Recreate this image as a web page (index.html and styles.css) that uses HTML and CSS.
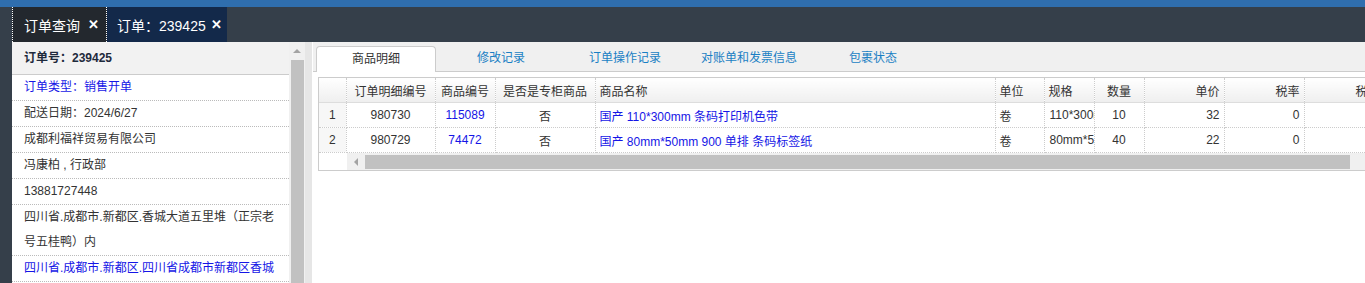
FILE: index.html
```html
<!DOCTYPE html>
<html lang="zh-CN">
    <head>
        <meta charset="UTF-8">
        <meta name="viewport" content="width=device-width, initial-scale=1.0">
        <title>订单：239425</title>
        <link rel="stylesheet" href="styles.css">
    </head>

    <body>
        <div class="topbar"></div>
        <div class="tabbar">
            <div class="tab">订单查询 <span class="close">✕</span></div>
            <div class="tab current">订单：239425 <span class="close">✕</span></div>
        </div>

        <div class="main">
            <div class="side">
                <div class="side-list">
                    <div class="side-head">订单号：239425</div>
                    <div class="side-row blue">订单类型：销售开单</div>
                    <div class="side-row">配送日期：2024/6/27</div>
                    <div class="side-row">成都利福祥贸易有限公司</div>
                    <div class="side-row">冯康柏 , 行政部</div>
                    <div class="side-row">13881727448</div>
                    <div class="side-row">四川省.成都市.新都区.香城大道五里堆（正宗老号五桂鸭）内</div>
                    <div class="side-row blue">四川省.成都市.新都区.四川省成都市新都区香城</div>
                </div>
                <div class="vscroll">
                    <div class="arrow-up"></div>
                    <div class="vthumb"></div>
                </div>
            </div>
            <div class="gutter"></div>

            <div class="content">
                <div class="tabs">
                    <div class="ctab active">商品明细</div>
                    <div class="ctab">修改记录</div>
                    <div class="ctab">订单操作记录</div>
                    <div class="ctab">对账单和发票信息</div>
                    <div class="ctab">包裹状态</div>
                </div>

                <div class="grid">
                    <table>
                        <colgroup>
                            <col style="width: 27px">
                            <col style="width: 89px">
                            <col style="width: 60px">
                            <col style="width: 100px">
                            <col style="width: 400px">
                            <col style="width: 49px">
                            <col style="width: 50px">
                            <col style="width: 50px">
                            <col style="width: 80px">
                            <col style="width: 80px">
                            <col style="width: 80px">
                        </colgroup>
                        <thead>
                            <tr>
                                <th class="num"></th>
                                <th class="c">订单明细编号</th>
                                <th class="c">商品编号</th>
                                <th class="c">是否是专柜商品</th>
                                <th>商品名称</th>
                                <th>单位</th>
                                <th>规格</th>
                                <th class="c">数量</th>
                                <th class="r">单价</th>
                                <th class="r">税率</th>
                                <th class="r">税额</th>
                            </tr>
                        </thead>
                        <tbody>
                            <tr>
                                <td class="num">1</td>
                                <td class="c">980730</td>
                                <td class="c blue">115089</td>
                                <td class="c">否</td>
                                <td class="blue">国产 110*300mm 条码打印机色带</td>
                                <td>卷</td>
                                <td class="clip">110*300mm</td>
                                <td class="c">10</td>
                                <td class="r">32</td>
                                <td class="r">0</td>
                                <td class="r"></td>
                            </tr>
                            <tr>
                                <td class="num">2</td>
                                <td class="c">980729</td>
                                <td class="c blue">74472</td>
                                <td class="c">否</td>
                                <td class="blue">国产 80mm*50mm 900 单排 条码标签纸</td>
                                <td>卷</td>
                                <td class="clip">80mm*50mm</td>
                                <td class="c">40</td>
                                <td class="r">22</td>
                                <td class="r">0</td>
                                <td class="r"></td>
                            </tr>
                        </tbody>
                    </table>
                    <div class="hscroll">
                        <div class="arrow-left"></div>
                        <div class="hthumb"></div>
                    </div>
                </div>
            </div>
        </div>
    </body>
</html>
```

FILE: styles.css
```css
body {
    margin: 0;
    background-color: #353f4a;
    font-family: "Liberation Sans", "Noto Sans CJK SC", sans-serif;
    font-size: 12px;
    color: #333;
    height: 283px;
    overflow: hidden;
}

.topbar {
    height: 7px;
    background-color: #2f6eae;
}

.tabbar {
    height: 35px;
    display: flex;
    padding-left: 12px;
}

.tab {
    display: flex;
    align-items: center;
    gap: 8px;
    padding: 0 6px 0 11px;
    color: #fff;
    font-size: 14px;
    background-color: #23282e;
    border-left: 1px dotted #fff;
    border-right: 1px dotted #fff;
}

.tab.current {
    background-color: #13294a;
    border: none;
    padding-left: 10px;
    padding-right: 4px;
    gap: 5px;
}

.close {
    font-size: 13px;
    font-weight: bold;
    width: 12px;
}

.main {
    display: flex;
    margin-left: 12px;
    height: 241px;
    background-color: #fff;
}

/* left info panel */
.side {
    display: flex;
    width: 293px;
}

.side-list {
    width: 277px;
}

.side-head {
    height: 32px;
    line-height: 32px;
    padding-left: 12px;
    background-color: #f2f2f2;
    border-bottom: 1px solid #ccc;
    font-weight: bold;
    color: #1e2a3c;
}

.side-row {
    padding: 0 12px;
    line-height: 25px;
    border-bottom: 1px dotted #bbb;
}

.blue {
    color: #1515e6;
}

.vscroll {
    width: 16px;
    background-color: #f0f0f0;
    display: flex;
    flex-direction: column;
    align-items: center;
}

.arrow-up {
    margin: 7px 0 7px;
    width: 0;
    height: 0;
    border-left: 4px solid transparent;
    border-right: 4px solid transparent;
    border-bottom: 4px solid #a3a3a3;
}

.vthumb {
    flex: 1;
    width: 13px;
    background-color: #c1c1c1;
}

.gutter {
    width: 7px;
    background-color: #e6e6e6;
}

/* right content */
.content {
    flex: 1;
    min-width: 0;
    background-color: #fff;
    padding-left: 1px;
}

.tabs {
    display: flex;
    height: 25px;
    padding: 4px 0 0 3px;
    background-color: #f0f0f0;
    border-bottom: 1px solid #ccc;
}

.ctab {
    width: 124px;
    text-align: center;
    line-height: 25px;
    color: #1a7fc4;
}

.ctab.active {
    width: 118px;
    color: #333;
    background-color: #fff;
    border: 1px solid #ccc;
    border-bottom: none;
    border-radius: 4px 4px 0 0;
    margin-bottom: -1px;
    margin-right: 3px;
    line-height: 25px;
}

.grid {
    margin: 5px 0 0 5px;
    border: 1px solid #ccc;
    border-right: none;
    overflow: hidden;
}

table {
    border-collapse: collapse;
    table-layout: fixed;
    width: 1065px;
}

th, td {
    height: 24px;
    padding: 0 4px;
    white-space: nowrap;
    overflow: hidden;
    border-right: 1px dotted #ccc;
    border-bottom: 1px dotted #ccc;
    text-align: left;
    font-weight: normal;
}

th {
    background: linear-gradient(#fff, #efefef);
    border-bottom: 1px solid #ddd;
}

td.clip {
    text-overflow: clip;
    padding-left: 5px;
    padding-right: 0;
}

.c {
    text-align: center;
}

.r {
    text-align: right;
}

td.num {
    text-align: center;
    background-color: #f7f7f7;
}

.hscroll {
    display: flex;
    align-items: center;
    height: 17px;
    margin-left: 28px;
    background-color: #f0f0f0;
}

.arrow-left {
    margin: 0 7px 0 7px;
    width: 0;
    height: 0;
    border-top: 4px solid transparent;
    border-bottom: 4px solid transparent;
    border-right: 4px solid #a3a3a3;
}

.hthumb {
    width: 985px;
    height: 14px;
    background-color: #c1c1c1;
}
```
